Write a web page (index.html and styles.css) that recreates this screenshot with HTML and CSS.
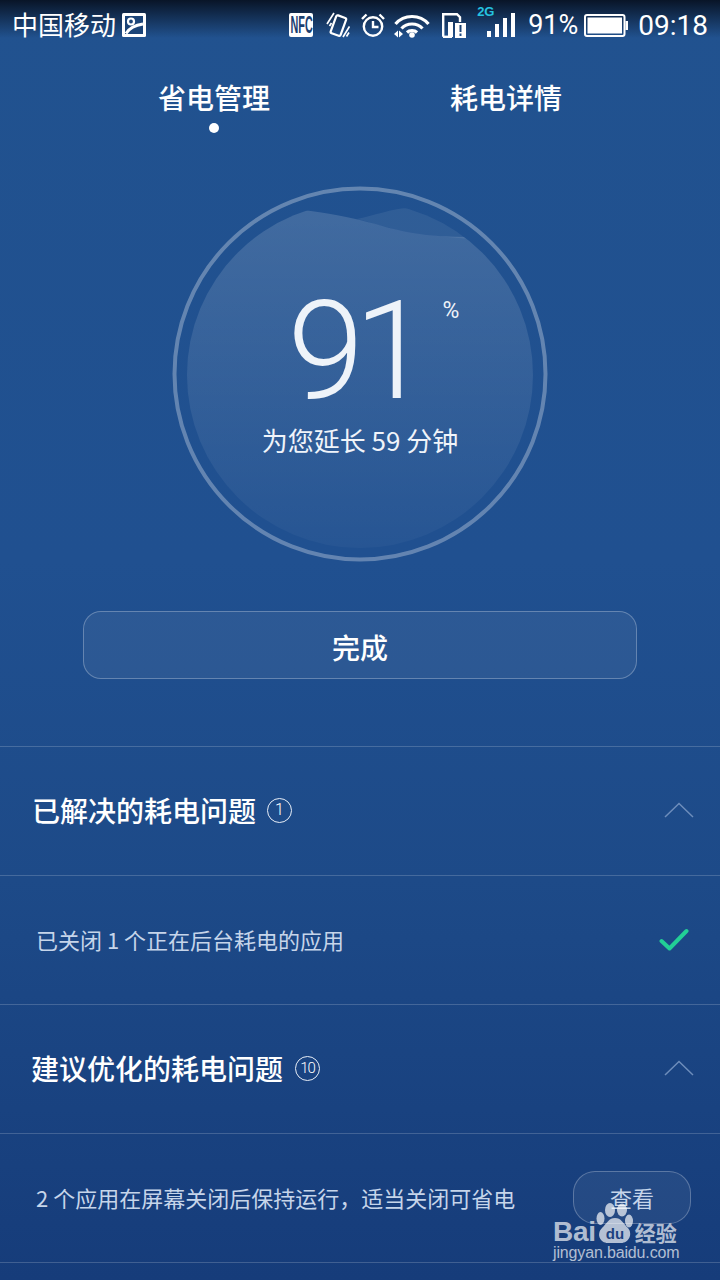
FILE: index.html
```html
<!DOCTYPE html>
<html>
	<head>
		<meta charset="utf-8">
		<title>省电管理</title>
		<link rel="stylesheet" href="styles.css">
	</head>
	<body>
		<div class="screen">
			<div class="statusbar">
				<div class="carrier">
					<span>中国移动</span>
					<svg class="ico-pic" width="24" height="24" viewBox="0 0 24 24">
						<rect width="24" height="24" rx="1.500" fill="#fff"/>
						<rect x="3" y="3" width="18" height="18" fill="#1b4478"/>
						<circle cx="9" cy="8.500" r="3" fill="none" stroke="#fff" stroke-width="2.200"/>
						<path d="M4 20.500C8 14 14 12 21 11" fill="none" stroke="#fff" stroke-width="3"/>
					</svg>
				</div>
				<div class="sys">
					<span class="nfc"><span>NFC</span></span>
					<svg class="ico-vib" width="24" height="26" viewBox="0 0 24 26" fill="none" stroke="#fff">
						<rect x="7" y="4" width="10.500" height="19" rx="1.500" stroke-width="2.200" transform="rotate(20 12 14)"/>
						<path d="M1 12 8 1M3.500 14 5.500 11M17 25 23.500 14.500M20.500 24.500 23 20.500" stroke-width="1.700"/>
					</svg>
					<svg class="ico-alarm" width="24" height="24" viewBox="0 0 24 24" fill="none" stroke="#fff" stroke-width="2.400">
						<circle cx="12" cy="13.500" r="9.200"/>
						<path d="M12 8V14H17.500M1 6 5.500 1.500M23 6 18.500 1.500"/>
					</svg>
					<svg class="ico-wifi" width="36" height="25" viewBox="0 0 36 25" fill="none" stroke="#fff" stroke-width="3.200">
						<path d="M1.500 11C10 1 26 1 34.500 11M7.500 15.500C13 9.500 23 9.500 28.500 15.500M13 19.500C15.500 17 20.500 17 23 19.500"/>
						<circle cx="18" cy="22" r="2.800" fill="#fff" stroke="none"/>
						<path d="M0 21 4 17.500V24.500ZM5 17.500 9 21 5 24.500Z" fill="#fff" stroke="none"/>
					</svg>
					<svg class="ico-sim" width="24" height="25" viewBox="0 0 24 25">
						<path fill="none" stroke="#fff" stroke-width="2.400" d="M1.200 23.800V1.200H15L18 4.200V9"/>
						<path fill="none" stroke="#fff" stroke-width="2.400" d="M1 23.800H10"/>
						<path fill="#fff" d="M6 9H11V24H6Z"/>
						<path fill="#fff" fill-rule="evenodd" d="M13 10H24V25H13ZM17.500 12V19H19.500V12ZM17.500 20.500V23H19.500V20.500Z"/>
					</svg>
					<div class="signal">
						<span class="net">2G</span>
						<i class="b1"></i><i class="b2"></i><i class="b3"></i><i class="b4"></i>
					</div>
					<span class="pct">91%</span>
					<svg class="ico-bat" width="44" height="23" viewBox="0 0 44 23">
						<rect x="1" y="1" width="39.500" height="21" rx="2" fill="none" stroke="#fff" stroke-width="2"/>
						<rect x="3.500" y="3.500" width="34.500" height="16" fill="#fff"/>
						<rect x="41.500" y="7" width="2.500" height="9" fill="#fff"/>
					</svg>
					<span class="time">09:18</span>
				</div>
			</div>

			<div class="tabs">
				<div class="tab on">省电管理<i class="dot"></i></div>
				<div class="tab">耗电详情</div>
			</div>

			<div class="gauge">
				<svg class="gauge-bg" width="400" height="400" viewBox="0 0 400 400">
					<defs>
						<clipPath id="disc"><circle cx="200" cy="200" r="173"/></clipPath>
						<linearGradient id="fill" x1="0" y1="0" x2="0" y2="1">
							<stop offset="0" stop-color="#fff" stop-opacity=".15"/>
							<stop offset="1" stop-color="#fff" stop-opacity=".03"/>
						</linearGradient>
					</defs>
					<g clip-path="url(#disc)">
						<path fill="#fff" fill-opacity=".07" d="M197 44C215 40 232 34 247 33C258 33 268 36 277 38C290 44 300 54 310 64C290 62 272 61 253 58C238 56 220 50 197 44Z"/>
						<path fill="url(#fill)" d="M120 28 143 35C170 38 185 42 200 45C220 50 238 56 253 58C272 61 290 62 307 62H400V373H0V28Z"/>
					</g>
					<circle cx="200" cy="199" r="185.500" fill="none" stroke="#fff" stroke-opacity=".3" stroke-width="4"/>
				</svg>
				<div class="num">91<sup>%</sup></div>
				<div class="extend">为您延长 59 分钟</div>
			</div>

			<div class="done">完成</div>

			<div class="rows">
				<div class="row">
					<div class="title">已解决的耗电问题<span class="count">1</span></div>
					<svg class="chev" width="30" height="16" viewBox="0 0 30 16"><path d="M1 15 15 1.500 29 15" fill="none" stroke="#6d8dbb" stroke-width="1.500"/></svg>
				</div>
				<div class="row sub">
					<div class="text">已关闭 1 个正在后台耗电的应用</div>
					<svg class="check" width="30" height="24" viewBox="0 0 30 24"><path d="M2.500 14 10.500 21.500 27.500 4" fill="none" stroke="#22cf96" stroke-width="4" stroke-linecap="round" stroke-linejoin="round"/></svg>
				</div>
				<div class="row second">
					<div class="title">建议优化的耗电问题<span class="count small">10</span></div>
					<svg class="chev" width="30" height="16" viewBox="0 0 30 16"><path d="M1 15 15 1.500 29 15" fill="none" stroke="#6d8dbb" stroke-width="1.500"/></svg>
				</div>
				<div class="row sub">
					<div class="text">2 个应用在屏幕关闭后保持运行，适当关闭可省电</div>
					<div class="view">查看</div>
				</div>
				<div class="row end"></div>
			</div>

			<div class="mark">
				<div class="mark-top">
					<span class="bai">Bai</span>
					<svg class="paw" width="42" height="44" viewBox="0 0 42 44">
						<ellipse cx="14" cy="7" rx="5" ry="7"/>
						<ellipse cx="26" cy="7" rx="5" ry="6.500"/>
						<ellipse cx="4.500" cy="15.500" rx="4" ry="6.500"/>
						<ellipse cx="33" cy="18" rx="4" ry="6.500"/>
						<path d="M19 15C25 15 27 20 32 25C37 31 33 40 25 40H12C4 40 0 31 6 25C11 20 13 15 19 15Z"/>
						<text x="19" y="36" class="du">du</text>
					</svg>
					<span class="jy">经验</span>
				</div>
				<div class="mark-url">jingyan.baidu.com</div>
			</div>
		</div>
	</body>
</html>
```

FILE: styles.css
```css
* {
	margin: 0;
	padding: 0;
	box-sizing: border-box;
}
html, body {
	width: 720px;
	height: 1280px;
	overflow: hidden;
}
body {
	font-family: "Noto Sans CJK SC", "Noto Sans", sans-serif;
	color: #fff;
}
.screen {
	position: relative;
	width: 720px;
	height: 1280px;
	background: linear-gradient(#21528f 0, #205090 560px, #1d4a88 880px, #163c7a 1280px);
}

/* status bar */
.statusbar {
	height: 50px;
	padding: 0 12px 0 13px;
	display: flex;
	justify-content: space-between;
	align-items: center;
	background: linear-gradient(rgba(6, 14, 28, .9), rgba(6, 14, 28, 0) 38px);
}
.carrier {
	display: flex;
	align-items: center;
	gap: 6px;
	font-size: 26px;
	line-height: 34px;
	margin-left: -1px;
}
.carrier span {
	margin-top: -2px;
}
.sys {
	display: flex;
	align-items: center;
}
.nfc {
	width: 24px;
	height: 24px;
	background: #fff;
	border-radius: 2px;
	color: #1b3f70;
	font: bold 23px "Liberation Sans", sans-serif;
	display: flex;
	align-items: center;
	justify-content: center;
	overflow: hidden;
}
.nfc span {
	transform: scaleX(.47);
}
.ico-vib {
	margin-left: 13px;
}
.ico-alarm {
	margin-left: 11px;
}
.ico-wifi {
	margin-left: 9px;
}
.ico-sim {
	margin-left: 12px;
}
.signal {
	position: relative;
	width: 38px;
	height: 30px;
	margin: 0 0 6px 11px;
	display: flex;
	align-items: flex-end;
	justify-content: flex-end;
	gap: 4px;
}
.signal i {
	display: block;
	width: 4px;
	background: #fff;
}
.signal .b1 { height: 6px; }
.signal .b2 { height: 13px; }
.signal .b3 { height: 19px; }
.signal .b4 { height: 24px; }
.net {
	position: absolute;
	left: 0;
	top: -3px;
	font: bold 13px "Liberation Sans", sans-serif;
	color: #25c3e0;
}
.pct, .time {
	font-family: Roboto, sans-serif;
	font-size: 27px;
}
.pct {
	margin-left: 13px;
}
.ico-bat {
	margin-left: 6px;
}
.time {
	font-size: 28px;
	margin-left: 10px;
}

/* tabs */
.tabs {
	display: grid;
	grid-template-columns: 292px 292px;
	padding-left: 68px;
	height: 90px;
}
.tab {
	position: relative;
	text-align: center;
	font-size: 28px;
	font-weight: 500;
	line-height: 40px;
	padding-top: 27px;
}
.dot {
	position: absolute;
	left: 141px;
	top: 73px;
	width: 10px;
	height: 10px;
	border-radius: 50%;
	background: #fff;
}

/* gauge */
.gauge {
	position: relative;
	height: 471px;
	display: flex;
	flex-direction: column;
	align-items: center;
}
.gauge-bg {
	position: absolute;
	left: 160px;
	top: 35px;
}
.num {
	position: relative;
	margin: 141px 0 0 -12px;
	font-family: Roboto, sans-serif;
	font-weight: 300;
	font-size: 138px;
	line-height: 140px;
	letter-spacing: -10px;
	color: #eef3f9;
}
.num sup {
	position: absolute;
	left: 155px;
	top: 17px;
	font-size: 23px;
	line-height: 26px;
	font-weight: 400;
	letter-spacing: 0;
}
.extend {
	position: relative;
	margin-top: 1px;
	font-size: 26px;
	line-height: 36px;
	color: #f0f4fa;
}

/* button */
.done {
	width: 554px;
	height: 68px;
	margin: 0 auto;
	border: 1px solid rgba(255, 255, 255, .27);
	border-radius: 18px;
	background: rgba(255, 255, 255, .06);
	text-align: center;
	font-size: 28px;
	font-weight: 500;
	line-height: 70px;
}

/* list */
.rows {
	margin-top: 67px;
}
.row {
	height: 129px;
	border-top: 1px solid rgba(255, 255, 255, .18);
	display: flex;
	align-items: center;
	justify-content: space-between;
	padding: 0 26px 2px 32px;
}
.row.second {
	padding-left: 31px;
}
.row.sub {
	padding: 0 29px 2px 36px;
}
.row.end {
	height: 18px;
}
.title {
	display: flex;
	align-items: center;
	font-size: 28px;
	font-weight: 500;
	line-height: 40px;
}
.count {
	width: 25px;
	height: 25px;
	margin-left: 11px;
	border: 1.5px solid #e8eef7;
	border-radius: 50%;
	font: 300 16px/22px Roboto, sans-serif;
	text-align: center;
}
.count.small {
	margin-left: 12px;
	font-size: 15px;
	letter-spacing: -1px;
}
.check {
	margin-right: 2px;
}
.text {
	font-size: 22px;
	line-height: 32px;
	color: #c6d5ea;
}
.view {
	width: 118px;
	height: 53px;
	border: 1px solid rgba(255, 255, 255, .25);
	border-radius: 22px;
	background: rgba(255, 255, 255, .06);
	text-align: center;
	font-size: 22px;
	line-height: 51px;
	color: #c6d5ea;
}

/* watermark */
.mark {
	position: absolute;
	left: 553px;
	top: 1207px;
	width: 130px;
	color: rgba(255, 255, 255, .68);
}
.mark-top {
	display: flex;
	align-items: flex-end;
	height: 40px;
	white-space: nowrap;
}
.bai {
	margin-bottom: 3px;
	font: bold 28px/24px "Liberation Sans", sans-serif;
	letter-spacing: -.3px;
}
.paw {
	flex: none;
	fill: rgba(255, 255, 255, .68);
	overflow: visible;
}
.du {
	font: bold 15px "Liberation Sans", sans-serif;
	fill: #1b4180;
	text-anchor: middle;
}
.jy {
	margin: 0 0 4px -3px;
	font-size: 21px;
	font-weight: 700;
	line-height: 22px;
}
.mark-url {
	margin-top: -3px;
	font: 16px/18px "Liberation Sans", sans-serif;
	letter-spacing: -.15px;
	white-space: nowrap;
}
```
